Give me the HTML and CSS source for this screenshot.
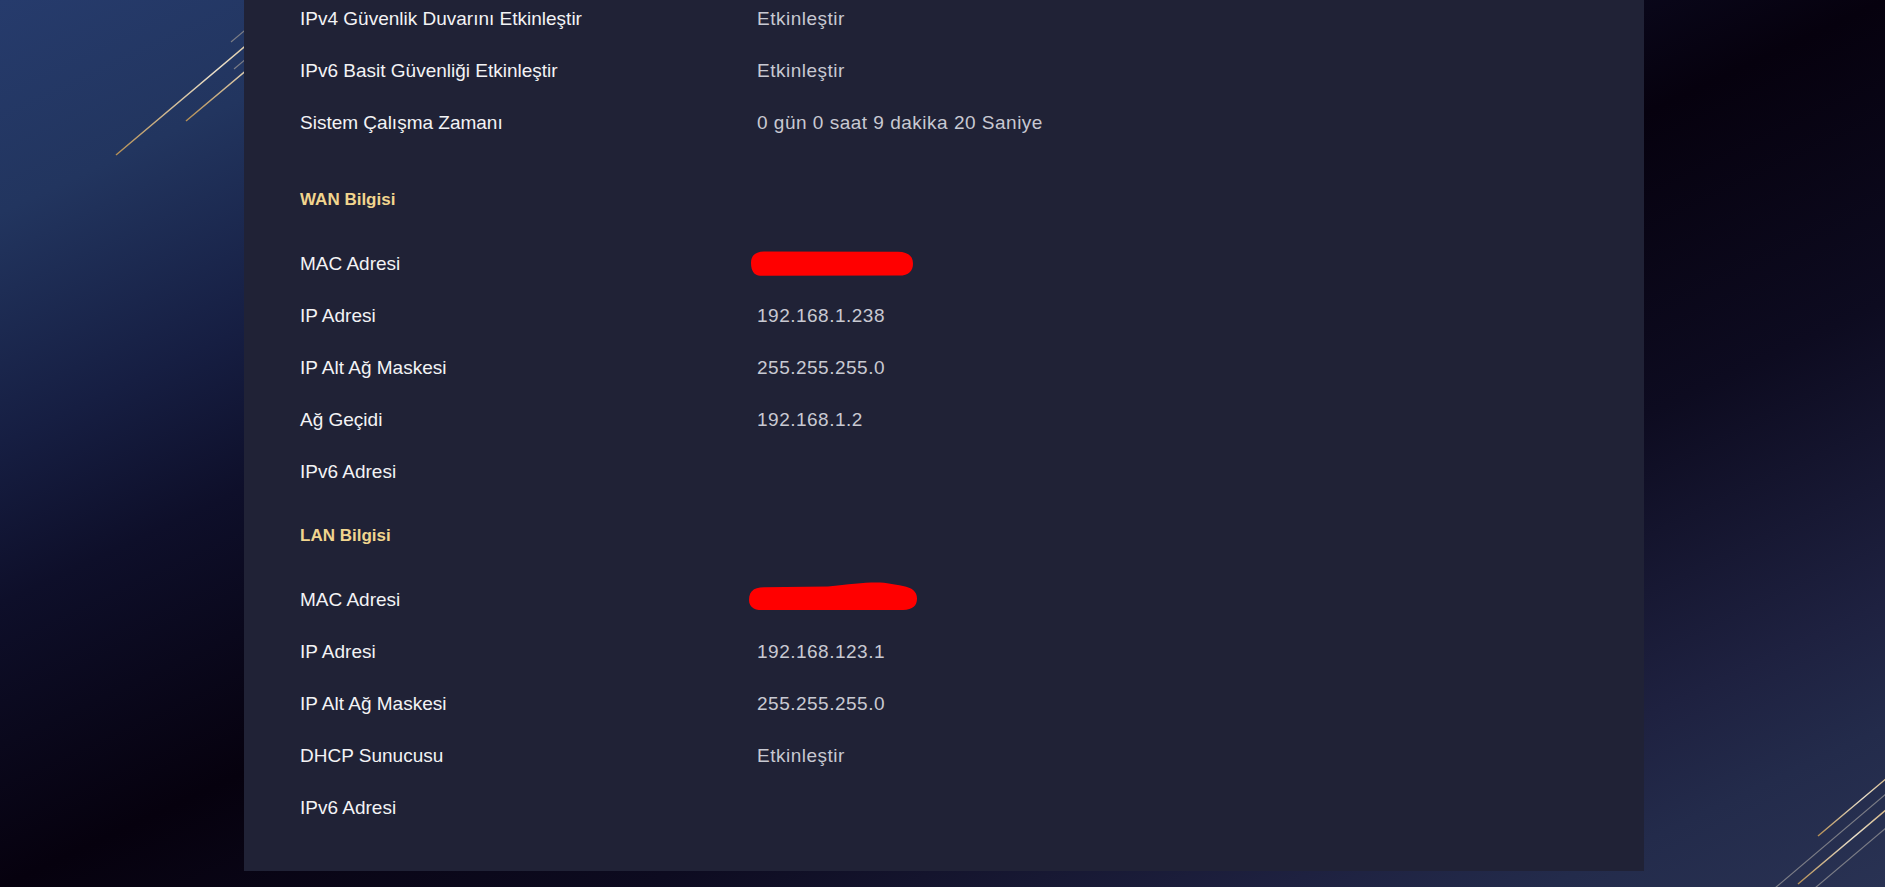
FILE: index.html
```html
<!DOCTYPE html>
<html lang="tr">
<head>
<meta charset="UTF-8" />
<meta name="viewport" content="width=device-width, initial-scale=1" />
<title>Durum Bilgisi</title>
<link rel="stylesheet" href="styles.css">
</head>
<body>

  <!-- dekoratif çizgiler -->
  <svg class="deco" width="1885" height="887" viewBox="0 0 1885 887">
    <defs>
      <linearGradient id="gold" x1="0" y1="1" x2="1" y2="0">
        <stop offset="0" stop-color="#b58f55" />
        <stop offset="0.55" stop-color="#ece2cc" />
        <stop offset="1" stop-color="#c9a264" />
      </linearGradient>
    </defs>
    <g fill="none" stroke-width="1.5">
      <line x1="116" y1="155" x2="300" y2="0" stroke="url(#gold)" />
      <line x1="186" y1="121" x2="330" y2="0" stroke="url(#gold)" />
      <line x1="231" y1="42" x2="281" y2="0" stroke="#7c7d86" stroke-width="1.2" />
      <line x1="234" y1="69" x2="316" y2="0" stroke="#7c7d86" stroke-width="1.2" />

      <line x1="1818" y1="836" x2="1900" y2="767" stroke="url(#gold)" />
      <line x1="1775" y1="888" x2="1900" y2="782" stroke="#7c7d86" stroke-width="1.2" />
      <line x1="1798" y1="884" x2="1900" y2="798" stroke="url(#gold)" />
      <line x1="1815" y1="888" x2="1900" y2="816" stroke="#7c7d86" stroke-width="1.2" />
    </g>
  </svg>

  <main class="panel">

    <section class="info first">
      <div class="row"><span class="label">IPv4 Güvenlik Duvarını Etkinleştir</span><span class="value">Etkinleştir</span></div>
      <div class="row"><span class="label">IPv6 Basit Güvenliği Etkinleştir</span><span class="value">Etkinleştir</span></div>
      <div class="row"><span class="label">Sistem Çalışma Zamanı</span><span class="value">0 gün 0 saat 9 dakika 20 Saniye</span></div>
    </section>

    <!-- WAN -->
    <section class="info">
      <h3 class="info-title">WAN Bilgisi</h3>
      <div class="row">
        <span class="label">MAC Adresi</span>
        <span class="value">
          <svg class="redact" width="172" height="36" viewBox="0 0 172 36">
            <path d="M3,17 C3,9 8,5.8 16,5.6 L150,5.8 C160,6 165,10 165,17.5 C165,25 161,29.6 151,29.6 L14,29.8 C6,29.8 3,25 3,17 Z" />
          </svg>
        </span>
      </div>
      <div class="row"><span class="label">IP Adresi</span><span class="value">192.168.1.238</span></div>
      <div class="row"><span class="label">IP Alt Ağ Maskesi</span><span class="value">255.255.255.0</span></div>
      <div class="row"><span class="label">Ağ Geçidi</span><span class="value">192.168.1.2</span></div>
      <div class="row"><span class="label">IPv6 Adresi</span><span class="value"></span></div>
    </section>

    <!-- LAN -->
    <section class="info">
      <h3 class="info-title">LAN Bilgisi</h3>
      <div class="row">
        <span class="label">MAC Adresi</span>
        <span class="value">
          <svg class="redact" width="172" height="36" viewBox="0 0 172 36">
            <path d="M1,18 C1,9 6,5.4 16,5.3 L80,4.6 C100,2.6 115,0.6 128,0.6 C140,0.6 145,2.6 155,4 C164,5.6 169,9.5 169,16.5 C169,23.5 165,27.8 155,27.9 L14,28.1 C5,28.1 1,24 1,18 Z" />
          </svg>
        </span>
      </div>
      <div class="row"><span class="label">IP Adresi</span><span class="value">192.168.123.1</span></div>
      <div class="row"><span class="label">IP Alt Ağ Maskesi</span><span class="value">255.255.255.0</span></div>
      <div class="row"><span class="label">DHCP Sunucusu</span><span class="value">Etkinleştir</span></div>
      <div class="row"><span class="label">IPv6 Adresi</span><span class="value"></span></div>
    </section>

  </main>

</body>
</html>
```

FILE: styles.css
```css
html {
  height: 100%;
  background: linear-gradient(to bottom right,
    #263b6c 0%,
    #22355f 12%,
    #161e42 25%,
    #0e0f2a 34%,
    #06010e 50%,
    #0d0b20 67%,
    #1e2140 84%,
    #232b4b 91%,
    #293253 100%);
}
body {
  margin: 0;
  font-family: "Liberation Sans", Arial, sans-serif;
  font-size: 19px;
  overflow: hidden;
}
.deco {
  position: fixed;
  top: 0;
  left: 0;
  z-index: 0;
}
/* sayfa biraz aşağı kaydırılmış halde */
.panel {
  position: relative;
  z-index: 1;
  width: 1400px;
  box-sizing: border-box;
  margin: -7px 0 0 244px;
  padding: 0 56px 37px;
  background: #202236;
}
.info.first {
  padding-bottom: 13px;
}
.info-title {
  margin: 26px 0;
  font-size: 17px;
  line-height: 24px;
  font-weight: bold;
  color: #f1d58e;
}
.row {
  display: grid;
  grid-template-columns: 457px 1fr;
  align-items: center;
  height: 52px;
  line-height: 24px;
}
.label {
  color: #f3f3f5;
}
.value {
  color: #c8c9d2;
  letter-spacing: 0.5px;
}
.redact {
  display: block;
  margin-left: -9px;
}
.redact path {
  fill: #ff0000;
}
```
